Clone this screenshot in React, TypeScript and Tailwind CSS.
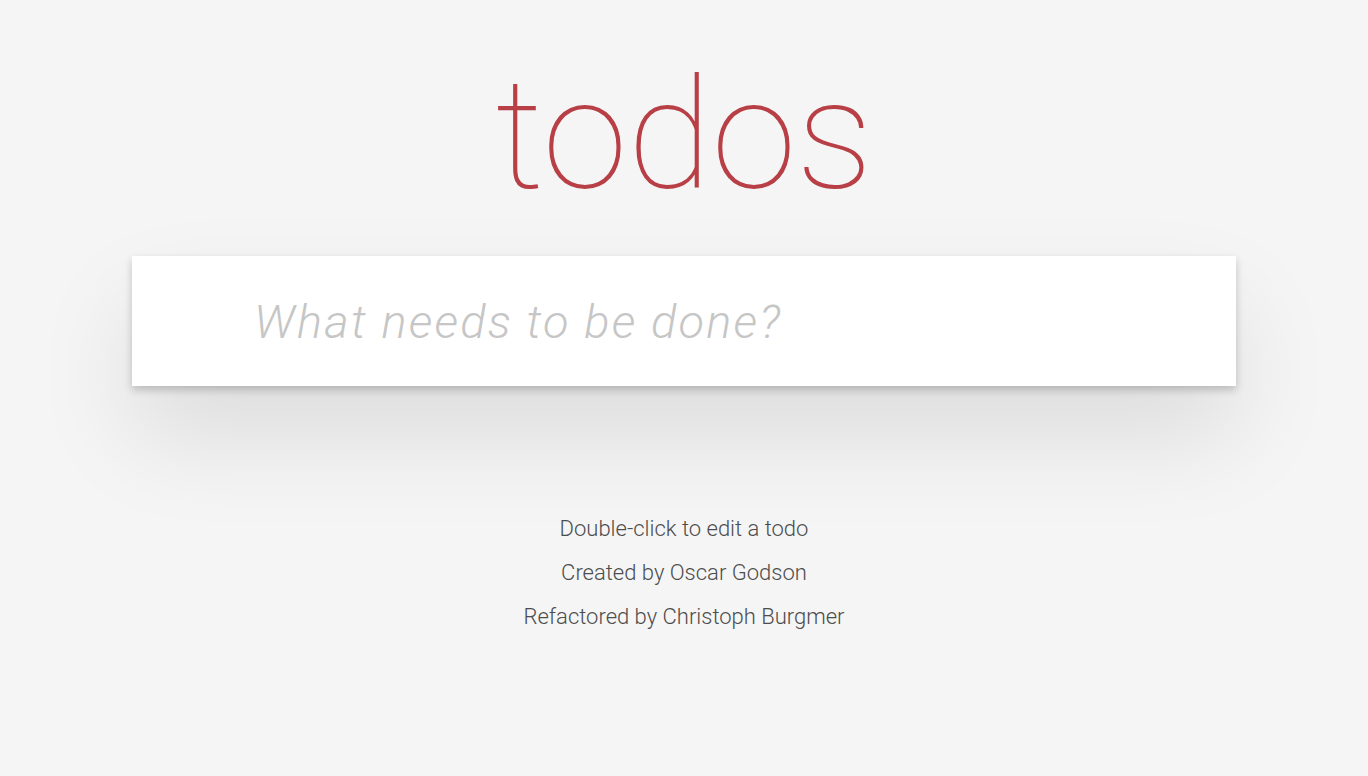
export default function App() {
  return (
    <div className="min-h-screen bg-[#f5f5f5] font-['Roboto','Liberation_Sans',sans-serif] text-[#111]">
      <section className="mx-auto w-[1104px]">
        <h1 className="pt-[59px] mb-[43px] text-center text-[154px] leading-none font-thin text-[#b83f45]">
          todos
        </h1>
        <div className="bg-white shadow-[0_4px_8px_0_rgba(0,0,0,0.2),0_50px_100px_0_rgba(0,0,0,0.1)]">
          <input
            className="block h-[130px] w-full bg-transparent pl-[122px] pr-8 text-[47px] font-light italic tracking-[2.2px] outline-none placeholder:text-[#c6c6c6]"
            placeholder="What needs to be done?"
          />
        </div>
      </section>
      <footer className="mt-[132px] flex flex-col items-center gap-[22px] text-[22px] leading-[22px] font-light text-[#4d4d4d]">
        <p>Double-click to edit a todo</p>
        <p>Created by Oscar Godson</p>
        <p>Refactored by Christoph Burgmer</p>
      </footer>
    </div>
  );
}
